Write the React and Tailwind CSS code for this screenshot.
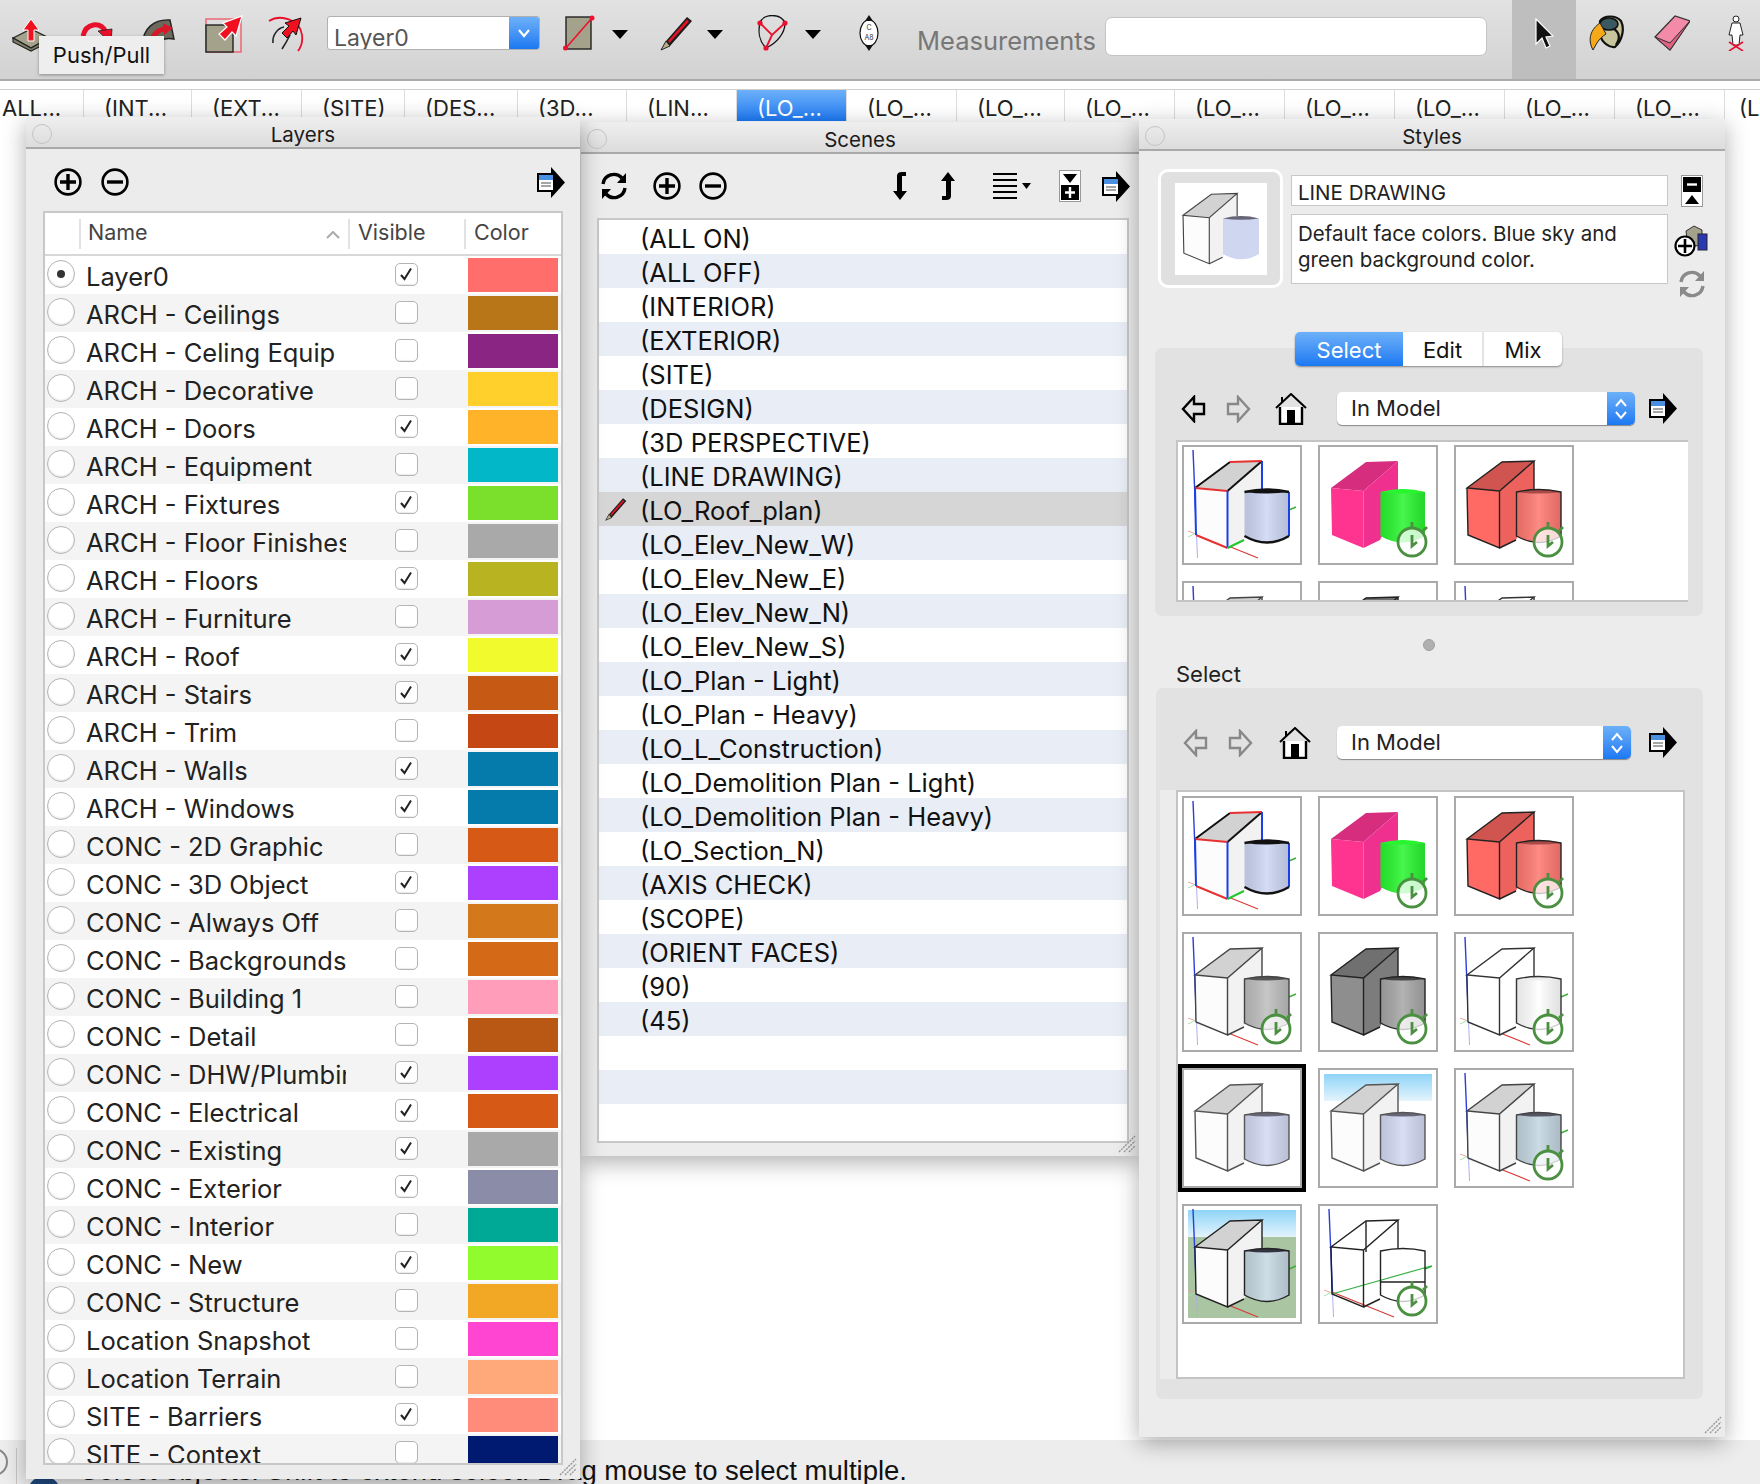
import { useId } from "react";

const tabs = [
  { label: "ALL...", w: "w-[84px]", left: true },
  { label: "(INT...", w: "w-[108px]" },
  { label: "(EXT...", w: "w-[110px]" },
  { label: "(SITE)", w: "w-[103px]" },
  { label: "(DES...", w: "w-[113px]" },
  { label: "(3D...", w: "w-[109px]" },
  { label: "(LIN...", w: "w-[110px]" },
  { label: "(LO_...", w: "w-[110px]", active: true },
  { label: "(LO_...", w: "w-[110px]" },
  { label: "(LO_...", w: "w-[108px]" },
  { label: "(LO_...", w: "w-[110px]" },
  { label: "(LO_...", w: "w-[110px]" },
  { label: "(LO_...", w: "w-[110px]" },
  { label: "(LO_...", w: "w-[110px]" },
  { label: "(LO_...", w: "w-[110px]" },
  { label: "(LO_...", w: "w-[110px]" },
];

const layers = [
  ["Layer0", true, "bg-[#ff6e6b]"],
  ["ARCH - Ceilings", false, "bg-[#b87618]"],
  ["ARCH - Celing Equip", false, "bg-[#8a2583]"],
  ["ARCH - Decorative", false, "bg-[#ffd02b]"],
  ["ARCH - Doors", true, "bg-[#ffb328]"],
  ["ARCH - Equipment", false, "bg-[#02b7c7]"],
  ["ARCH - Fixtures", true, "bg-[#7ae02b]"],
  ["ARCH - Floor Finishes", false, "bg-[#a9a9a9]"],
  ["ARCH - Floors", true, "bg-[#b8b321]"],
  ["ARCH - Furniture", false, "bg-[#d69cd6]"],
  ["ARCH - Roof", true, "bg-[#f1fa2d]"],
  ["ARCH - Stairs", true, "bg-[#c65a14]"],
  ["ARCH - Trim", false, "bg-[#c54714]"],
  ["ARCH - Walls", true, "bg-[#057bac]"],
  ["ARCH - Windows", true, "bg-[#057bac]"],
  ["CONC - 2D Graphic", false, "bg-[#d65a16]"],
  ["CONC - 3D Object", true, "bg-[#ad40ff]"],
  ["CONC - Always Off", false, "bg-[#d4791b]"],
  ["CONC - Backgrounds", false, "bg-[#d46a18]"],
  ["CONC - Building 1", false, "bg-[#ff9dbb]"],
  ["CONC - Detail", false, "bg-[#b85814]"],
  ["CONC - DHW/Plumbing", true, "bg-[#ad40ff]"],
  ["CONC - Electrical", true, "bg-[#d65a16]"],
  ["CONC - Existing", true, "bg-[#a9a9a9]"],
  ["CONC - Exterior", true, "bg-[#8b8ca8]"],
  ["CONC - Interior", false, "bg-[#00a896]"],
  ["CONC - New", true, "bg-[#92fb2d]"],
  ["CONC - Structure", false, "bg-[#f2a825]"],
  ["Location Snapshot", false, "bg-[#ff45d2]"],
  ["Location Terrain", false, "bg-[#ffa97a]"],
  ["SITE - Barriers", true, "bg-[#ff8c7a]"],
  ["SITE - Context", false, "bg-[#001a72]"],
];

const scenes = [
  "(ALL ON)", "(ALL OFF)", "(INTERIOR)", "(EXTERIOR)", "(SITE)", "(DESIGN)",
  "(3D PERSPECTIVE)", "(LINE DRAWING)", "(LO_Roof_plan)", "(LO_Elev_New_W)",
  "(LO_Elev_New_E)", "(LO_Elev_New_N)", "(LO_Elev_New_S)", "(LO_Plan - Light)",
  "(LO_Plan - Heavy)", "(LO_L_Construction)", "(LO_Demolition Plan - Light)",
  "(LO_Demolition Plan - Heavy)", "(LO_Section_N)", "(AXIS CHECK)", "(SCOPE)",
  "(ORIENT FACES)", "(90)", "(45)", "", "", "",
];

/* ---------------- STYLE THUMBNAILS ---------------- */
const WHITE_BOX = { front: "#fcfcfc", top: "#d2d2d2", side: "#f2f2f2" };

const thumbs = [
  { ...WHITE_BOX, cyl: "#ced6f3", cylTop: "#111", colored: true, axes: true },
  { front: "#ff3390", top: "#d62d7e", side: "#f0308f", cyl: "#27f52e", cylTop: "#27f52e", clock: true },
  { front: "#ff6a65", top: "#d05550", side: "#ee625d", cyl: "#ff7770", cylTop: "#a84a48", edge: "#222", clock: true },
  { ...WHITE_BOX, cyl: "#bdbdbd", cylTop: "#555", edge: "#444", axes: true, clock: true },
  { front: "#8e8e8e", top: "#707070", side: "#7c7c7c", cyl: "#a6a6a6", cylTop: "#444", edge: "#222", clock: true },
  { front: "#fff", top: "#fff", side: "#fff", cyl: "#fff", cylTop: "#eee", edge: "#333", axes: true, clock: true },
  { ...WHITE_BOX, cyl: "#d3d9f3", cylTop: "#667", edge: "#555", selected: true },
  { ...WHITE_BOX, cyl: "#d3d9f3", cylTop: "#667", edge: "#555", sky: true },
  { ...WHITE_BOX, cyl: "#c3d5e0", cylTop: "#556", edge: "#444", axes: true, clock: true },
  { ...WHITE_BOX, cyl: "#c6d8e2", cylTop: "#334", edge: "#222", axes: true, sky: true, ground: true },
  { front: "none", top: "none", side: "none", cyl: "none", cylTop: "#fff", edge: "#222", axes: true, xray: true, clock: true },
];

const CYL = "M62.5 47 Q85 42 107 47 V91 Q85 104 62.5 91Z";

const Thumb = ({ t }) => {
  const id = useId();
  const edge = t.edge;
  return (
    <div className={`w-[120px] h-[120px] border-2 border-[#aaaaaa] bg-white ${t.selected ? "ring-4 ring-black" : ""}`}>
      <svg viewBox="2 2 116 116" className="w-full h-full blur-[0.35px]">
        <defs>
          <linearGradient id={id + "s"} x1="0" y1="0" x2="0" y2="1">
            <stop offset="0" stopColor="#8fd4f8" />
            <stop offset="1" stopColor="#e4f4fc" />
          </linearGradient>
          <linearGradient id={id + "c"} x1="0" y1="0" x2="1" y2="0">
            <stop offset="0" stopColor="#000" stopOpacity="0.1" />
            <stop offset="0.5" stopColor="#fff" stopOpacity="0.15" />
            <stop offset="1" stopColor="#000" stopOpacity="0.12" />
          </linearGradient>
        </defs>
        {t.sky && <rect x="6" y="6" width="108" height="27" fill={`url(#${id}s)`} />}
        {t.ground && <rect x="6" y="33" width="108" height="81" fill="#a9c5a1" />}
        {t.axes && (
          <g fill="none" strokeWidth="1">
            <path d="M11 5 L14.5 88" stroke="#2a3fd8" strokeWidth="1.4" />
            <path d="M14.5 88 L15.5 113" stroke="#aab0f0" />
            <path d="M14 88 L76 113" stroke="#d83a3a" strokeWidth="1.2" />
            <path d="M6 86 L14 89" stroke="#e8a0a0" />
            <path d="M6 92 L14 88" stroke="#a8e0a8" />
            <path d="M107 65 L114 62" stroke="#3ab03a" strokeWidth="1.4" />
          </g>
        )}
        {t.xray && <path d="M14 90 L113 62" stroke="#35b045" strokeWidth="1.2" />}
        <polygon points="13,43 48,17 80,16 45.5,46" fill={t.top} />
        <polygon points="45.5,46 80,16 80,60 62,95 45.5,103" fill={t.side} />
        <polygon points="13,43 45.5,46 45.5,103 14,90" fill={t.front} />
        <path d={CYL} fill={t.cyl} />
        {t.cyl !== "none" && <path d={CYL} fill={`url(#${id}c)`} />}
        <path d="M62.5 47 Q85 41 107 47 Q85 50 62.5 47Z" fill={t.cylTop} />
        {edge && (
          <g fill="none" stroke={edge} strokeWidth="1.4">
            <path d="M13 43 L48 17 L80 16 L45.5 46 Z M13 43 L14 90 L45.5 103 L45.5 46" />
            <path d="M80 16 V44 M45.5 103 L62 95" />
            <path d={CYL} />
            {t.xray && <path d="M48 17 V48 M62.5 78 H107" />}
          </g>
        )}
        {t.colored && (
          <g fill="none" strokeWidth="2">
            <path d="M13 43 L48 17 M80 16 L45.5 46" stroke="#111" />
            <path d="M48 17 L80 16 M13 43 L45.5 46 M14 90 L45.5 103" stroke="#e83030" />
            <path d="M13 43 L14 90 M45.5 46 V103 M80 16 V46 M107 47 V91" stroke="#1a40e8" />
            <path d="M45.5 103 L62 95" stroke="#22c830" />
            <path d="M62.5 47 Q85 42 107 47 M62.5 91 Q85 104 107 91" stroke="#111" strokeWidth="2.4" />
          </g>
        )}
        {t.clock && (
          <g fill="none" stroke="#4a9040">
            <circle cx="94" cy="97" r="14" strokeWidth="2.8" fill="#ffffff" fillOpacity="0.75" />
            <path d="M94 83 V77 M105 86 L109 82" strokeWidth="2.8" />
            <path d="M94 90 V101 L99 97" strokeWidth="2.8" />
          </g>
        )}
      </svg>
    </div>
  );
};

/* ---------------- ICONS ---------------- */
const PlusCircle = () => (
  <svg width="28" height="28" viewBox="0 0 28 28" fill="none" stroke="#000" strokeWidth="2.6">
    <circle cx="14" cy="14" r="12.4" />
    <path d="M14 6 V22 M6 14 H22" strokeWidth="3.4" />
  </svg>
);

const MinusCircle = () => (
  <svg width="28" height="28" viewBox="0 0 28 28" fill="none" stroke="#000" strokeWidth="2.6">
    <circle cx="14" cy="14" r="12.4" />
    <path d="M6 14 H22" strokeWidth="3.4" />
  </svg>
);

const DetailsArrow = () => (
  <svg width="28" height="31" viewBox="0 0 28 31">
    <path d="M0 6 H14 V0 L28 15.5 L14 31 V25 H0 Z" fill="#000" />
    <rect x="2" y="8" width="14" height="15" fill="#fff" />
    <rect x="2" y="8" width="14" height="5" fill="#4a8fe0" />
    <path d="M4 16 H14 M4 19 H14" stroke="#888" strokeWidth="1.5" />
  </svg>
);

const SyncIcon = ({ color = "#000" }) => (
  <svg width="28" height="28" viewBox="0 0 28 28" fill="none" stroke={color} strokeWidth="3.4">
    <path d="M3 12 A11 11 0 0 1 22 6" />
    <path d="M25 16 A11 11 0 0 1 6 22" />
    <path d="M26 1 V11 H17 Z M2 27 V17 H11 Z" fill={color} stroke="none" />
  </svg>
);

const Caret = ({ className }) => (
  <svg width="16" height="9" viewBox="0 0 16 9" className={className}>
    <path d="M0 0 H16 L8 9 Z" fill="#000" />
  </svg>
);

const PushPullIcon = () => (
  <svg width="38" height="34" viewBox="0 0 38 34" className="mt-[3px]">
    <path d="M1 20 L19 11 L37 20 L19 30 Z" fill="#a4a28a" stroke="#222" strokeWidth="1.2" />
    <path d="M1 20 V24 L19 33 L37 24 V20 L19 30 Z" fill="#7f7d6a" stroke="#222" strokeWidth="1.2" />
    <path d="M19 1 L27 12 H22 V23 H16 V12 H11 Z" fill="#f01020" stroke="#fff" strokeWidth="1" />
  </svg>
);

const RotateIcon = () => (
  <svg width="33" height="30" viewBox="0 0 33 30" className="mt-[4px]" fill="none">
    <path d="M3 17 C6 4 20 2 26 13" stroke="#e8102a" strokeWidth="5" />
    <path d="M18 12 L32 10 L31 24 Z" fill="#e8102a" stroke="#222" strokeWidth="0.8" />
  </svg>
);

const FollowMeIcon = () => (
  <svg width="36" height="34" viewBox="0 0 36 34" className="mt-[2px]" fill="none">
    <path d="M3 28 C2 12 14 2 30 3 L34 22 C24 20 16 24 14 32 Z" fill="#6c6a5c" stroke="#222" strokeWidth="1.4" />
    <path d="M11 27 C12 18 18 12 26 12" stroke="#d81828" strokeWidth="5" />
    <path d="M23 6 L33 11 L24 18 Z" fill="#d81828" />
  </svg>
);

const MoveIcon = () => (
  <svg width="38" height="38" viewBox="0 0 38 38">
    <rect x="1" y="4" width="35" height="33" fill="none" stroke="#f06070" strokeWidth="1.4" />
    <rect x="1" y="10" width="27" height="27" fill="#a4a28a" stroke="#222" strokeWidth="1.4" />
    <path d="M37 1 L31 21 L27 17 L20 25 L14 19 L22 12 L18 8 Z" fill="#f01020" stroke="#fff" strokeWidth="1.2" />
  </svg>
);

const OffsetIcon = () => (
  <svg width="36" height="38" viewBox="0 0 36 38" fill="none">
    <path d="M1 6 C12 -1 32 4 34 20 C35 27 33 32 30 36" stroke="#e8102a" strokeWidth="1.8" />
    <path d="M5 28 C4 20 10 13 16 12 M14 34 C18 28 20 24 22 20" stroke="#222" strokeWidth="1.6" />
    <path d="M33 3 L28 20 L25 16 L19 23 L14 18 L21 11 L17 8 Z" fill="#f01020" stroke="#111" strokeWidth="1" />
  </svg>
);

const RectLineIcon = () => (
  <svg width="32" height="36" viewBox="0 0 32 36">
    <rect x="3" y="2" width="25" height="32" fill="#a4a28a" stroke="#222" strokeWidth="1.4" />
    <path d="M2 34 L29 3" stroke="#f01030" strokeWidth="1.6" />
    <circle cx="2.5" cy="33" r="2.5" fill="#f01030" />
    <circle cx="29" cy="3" r="2.5" fill="#f01030" />
  </svg>
);

const PencilIcon = ({ w = 33, h = 36 }) => (
  <svg width={w} height={h} viewBox="0 0 33 36">
    <path d="M1 35 L6 26 L27 2 L32 6 L10 31 Z" fill="#1c1c1c" />
    <path d="M8 26 L27 4.5 L29 6.5 L9.5 28 Z" fill="#e01426" />
    <path d="M1 35 L6 26 L10 31 Z" fill="#b8ac88" stroke="#111" strokeWidth="0.8" />
  </svg>
);

const PolygonIcon = () => (
  <svg width="34" height="36" viewBox="0 0 34 36" fill="none">
    <path d="M5 8 C8 -2 26 -2 30 8 C30 18 22 28 11 33 C4 26 3 16 5 8" stroke="#111" strokeWidth="1.3" />
    <path d="M5 8 L17 20 L30 8 M17 20 L11 33" stroke="#e81030" strokeWidth="1.8" />
    <circle cx="5" cy="8" r="2.6" fill="#e81030" />
    <circle cx="30" cy="8" r="2.6" fill="#e81030" />
    <circle cx="11" cy="33" r="2.6" fill="#e81030" />
  </svg>
);

const SectionIcon = () => (
  <svg width="20" height="36" viewBox="0 0 20 36">
    <ellipse cx="10" cy="18" rx="9" ry="13" fill="#fff" stroke="#111" strokeWidth="1.2" />
    <path d="M10 0 L14 6 H6 Z M10 36 L14 30 H6 Z" fill="#111" />
    <text x="10" y="15" fontSize="7" textAnchor="middle" fill="#333" fontFamily="Inter, sans-serif">C</text>
    <text x="10" y="25" fontSize="7" textAnchor="middle" fill="#333" fontFamily="Inter, sans-serif">A8</text>
  </svg>
);

const ArrowCursor = () => (
  <svg width="20" height="32" viewBox="0 0 20 32">
    <path d="M2 1 V26 L8 20 L12 30 L16 28 L12 19 L19 18 Z" fill="#111" stroke="#fff" strokeWidth="1.2" />
  </svg>
);

const PaintIcon = () => (
  <svg width="36" height="36" viewBox="0 0 36 36" fill="none">
    <path d="M12 6 C16 0 28 0 33 6 C37 14 34 26 27 32 C22 33 14 28 12 20 Z" fill="#c8c49c" stroke="#111" strokeWidth="2.2" />
    <ellipse cx="21" cy="9" rx="9" ry="6" fill="#3a5860" stroke="#111" strokeWidth="1.6" />
    <path d="M26 14 C32 18 32 24 28 30" stroke="#111" strokeWidth="2.4" />
    <path d="M12 8 C3 14 -1 24 5 35 C8 30 10 24 18 19 Z" fill="#f5a818" stroke="#222" strokeWidth="1" />
  </svg>
);

const EraserIcon = () => (
  <svg width="36" height="36" viewBox="0 0 36 36">
    <path d="M1 22 L21 1 L36 6 L16 35 Z" fill="#f28aa8" stroke="#333" strokeWidth="1.2" />
    <path d="M1 22 L16 28 L36 6 L16 35 Z" fill="#e0607f" stroke="#333" strokeWidth="1" />
  </svg>
);

const ManIcon = () => (
  <svg width="18" height="36" viewBox="0 0 18 36">
    <circle cx="9" cy="4" r="3" fill="#fff" stroke="#222" />
    <path d="M5 8 H13 L16 20 H13 L12 30 H6 L5 20 H2 Z" fill="#fff" stroke="#222" />
    <path d="M2 27 L16 36 M16 27 L2 36" stroke="#e81030" strokeWidth="1.6" />
  </svg>
);

const BentArrow = ({ up }) => (
  <svg width="14" height="28" viewBox="0 0 14 28" fill="#000">
    {up ? (
      <path d="M7 0 L14 9 H10 V24 Q10 28 5 28 H1 V24 H5 V9 H0 Z" />
    ) : (
      <path d="M7 28 L0 19 H4 V4 Q4 0 9 0 H13 V4 H9 V19 H14 Z" />
    )}
  </svg>
);

const ListLines = () => (
  <svg width="38" height="28" viewBox="0 0 38 28">
    <path d="M0 2 H24 M0 8 H24 M0 14 H24 M0 20 H24 M0 26 H24" stroke="#000" strokeWidth="2" />
    <path d="M29 11 H38 L33.5 17 Z" fill="#000" />
  </svg>
);

const SplitDown = () => (
  <svg width="22" height="32" viewBox="0 0 22 32">
    <rect x="0.5" y="0.5" width="21" height="31" fill="#fff" stroke="#999" />
    <rect x="2" y="15" width="18" height="15" fill="#000" />
    <path d="M4 4 H18 L11 13 Z" fill="#000" />
    <path d="M11 17 V28 M6 22.5 H16" stroke="#fff" strokeWidth="2.4" />
  </svg>
);

const SplitUp = () => (
  <svg width="22" height="32" viewBox="0 0 22 32" className="shrink-0">
    <rect x="0.5" y="0.5" width="21" height="31" fill="#fff" stroke="#999" />
    <rect x="2" y="2" width="18" height="15" fill="#000" />
    <path d="M6 9.5 H16" stroke="#fff" strokeWidth="2.4" />
    <path d="M4 29 H18 L11 20 Z" fill="#000" />
  </svg>
);

const AddStyleIcon = () => (
  <svg width="34" height="32" viewBox="0 0 34 32">
    <path d="M12 6 L20 1 L28 5 V20 L14 22 Z" fill="#a4a28a" stroke="#333" />
    <rect x="24" y="9" width="9" height="16" fill="#2a38b0" stroke="#223" />
    <circle cx="11" cy="21" r="9.5" fill="#fff" stroke="#000" strokeWidth="2.2" />
    <path d="M11 14 V28 M4 21 H18" stroke="#000" strokeWidth="2.6" />
  </svg>
);

const NavArrow = ({ right, color = "#000" }) => (
  <svg width="25" height="28" viewBox="0 0 25 28" fill="#fff" stroke={color} strokeWidth="2.4">
    {right ? (
      <path d="M2 9 H12 V2 L23 14 L12 26 V19 H2 Z" fill="none" />
    ) : (
      <path d="M23 9 H13 V2 L2 14 L13 26 V19 H23 Z" fill="none" />
    )}
  </svg>
);

const HomeIcon = () => (
  <svg width="34" height="32" viewBox="0 0 34 32">
    <path d="M2 15 L17 1 L32 15" fill="none" stroke="#000" strokeWidth="2" />
    <path d="M8 4 V10" stroke="#000" strokeWidth="2" />
    <path d="M6 14 V31 H28 V14" fill="#fff" stroke="#000" strokeWidth="2.4" />
    <rect x="13" y="17" width="8" height="14" fill="#000" />
  </svg>
);

const Grip = () => (
  <svg width="18" height="18" viewBox="0 0 18 18" stroke="#999" strokeWidth="1.4" className="absolute right-[3px] bottom-[3px]">
    <path d="M1 17 L17 1 M6 17 L17 6 M11 17 L17 11" strokeDasharray="2 1" />
  </svg>
);

/* ---------------- SHARED PIECES ---------------- */
const Panel = ({ title, className, children }) => (
  <div className={`absolute bg-[#ececec] shadow-[0_6px_22px_rgba(0,0,0,0.32)] flex flex-col ${className}`}>
    <div className="relative h-[32px] shrink-0 bg-gradient-to-b from-[#efefef] to-[#dcdcdc] border-b-2 border-[#a9a9a9] flex items-center justify-center pt-[6px] text-[20.5px] text-[#1c1c1c]">
      <span className="absolute left-[6px] top-[7px] w-[20px] h-[20px] rounded-full border border-[#c4c4c4]" />
      {title}
    </div>
    {children}
    <Grip />
  </div>
);

const StyleSelect = ({ w }) => (
  <div className={`h-[33px] ${w} bg-white rounded-[5px] shadow-[0_1px_1px_rgba(0,0,0,0.4)] flex items-center justify-between overflow-hidden`}>
    <span className="pl-[14px] text-[22px] text-[#222]">In Model</span>
    <span className="w-[28px] h-full bg-gradient-to-b from-[#6cb0f8] to-[#1a78f2] flex items-center justify-center">
      <svg width="14" height="24" viewBox="0 0 14 24" fill="none" stroke="#fff" strokeWidth="2">
        <path d="M2 9 L7 3 L12 9 M2 15 L7 21 L12 15" />
      </svg>
    </span>
  </div>
);

const LayerRow = ({ name, visible, color, index }) => (
  <div className={`h-[38px] flex items-center pl-[2px] ${index % 2 ? "bg-[#f4f4f4]" : "bg-white"}`}>
    <span className="w-[28px] h-[28px] -mt-[2px] rounded-full bg-white border border-[#b4b4b4] shadow-[inset_0_-1px_2px_rgba(0,0,0,0.12)] flex items-center justify-center shrink-0">
      {index === 0 && <span className="w-[8px] h-[8px] rounded-full bg-[#333]" />}
    </span>
    <span className="ml-[11px] w-[260px] overflow-hidden whitespace-nowrap text-[25.5px] leading-[34px] text-[#222] pt-[4px]">{name}</span>
    <span className="w-[120px] flex justify-center">
      <span className="w-[23px] h-[23px] -mt-[2px] rounded-[5px] bg-white border border-[#b4b4b4] shadow-[inset_0_-1px_1px_rgba(0,0,0,0.08)] flex items-center justify-center">
        {visible && (
          <svg width="14" height="14" viewBox="0 0 14 14" fill="none" stroke="#222" strokeWidth="2">
            <path d="M2 8 L5.5 12 L12 1.5" />
          </svg>
        )}
      </span>
    </span>
    <span className={`ml-[2px] w-[90px] h-[34px] ${color}`} />
  </div>
);

const App = () => {
  return (
    <div className="relative w-[1760px] h-[1484px] overflow-hidden bg-white font-[Inter,sans-serif] text-[#222]">
      {/* TOOLBAR */}
      <div className="relative h-[81px] bg-gradient-to-b from-[#e2e2e2] to-[#d2d2d2] border-b-2 border-[#ababab] flex items-start pt-[15px]">
        <span className="ml-[12px]"><PushPullIcon /></span>
        <span className="ml-[30px]"><RotateIcon /></span>
        <span className="ml-[27px]"><FollowMeIcon /></span>
        <span className="ml-[29px]"><MoveIcon /></span>
        <span className="ml-[25px]"><OffsetIcon /></span>
        <div className="ml-[23px] mt-[1px] w-[213px] h-[34px] bg-white border border-[#b0b0b0] rounded-[3px] flex justify-between overflow-hidden">
          <span className="pl-[6px] pt-[5px] text-[23px] leading-[32px] text-[#555]">Layer0</span>
          <span className="w-[30px] h-full bg-gradient-to-b from-[#6cb0f8] to-[#1a78f2] flex items-center justify-center">
            <svg width="14" height="10" viewBox="0 0 14 10" fill="none" stroke="#fff" strokeWidth="2.2">
              <path d="M2 2 L7 8 L12 2" />
            </svg>
          </span>
        </div>
        <span className="ml-[23px]"><RectLineIcon /></span>
        <Caret className="ml-[17px] mt-[15px]" />
        <span className="ml-[32px]"><PencilIcon /></span>
        <Caret className="ml-[14px] mt-[15px]" />
        <span className="ml-[32px]"><PolygonIcon /></span>
        <Caret className="ml-[16px] mt-[15px]" />
        <span className="ml-[38px]"><SectionIcon /></span>
        <span className="ml-[38px] mt-[10px] text-[25.5px] leading-[32px] text-[#777] w-[179px] whitespace-nowrap">Measurements</span>
        <div className="ml-[9px] mt-[2px] w-[382px] h-[39px] bg-white rounded-[7px] border border-[#c4c4c4] shrink-0" />
        <div className="ml-[25px] -mt-[15px] w-[64px] h-[79px] bg-[#bebebe] flex justify-center pt-[18px]">
          <ArrowCursor />
        </div>
        <span className="ml-[12px]"><PaintIcon /></span>
        <span className="ml-[30px]"><EraserIcon /></span>
        <span className="ml-[37px]"><ManIcon /></span>
        <div className="absolute left-[39px] top-[36px] w-[125px] h-[38px] bg-[#eeeeee] shadow-[0_1px_3px_rgba(0,0,0,0.35)] flex items-center justify-center text-[22px] text-[#111]">
          Push/Pull
        </div>
      </div>

      {/* SCENE TABS */}
      <div className="mt-[8px] h-[32px] bg-white border-t border-[#d0d0d0] flex overflow-hidden">
        {tabs.map((tab, i) => (
          <div
            key={i}
            className={`${tab.w} shrink-0 text-[22px] leading-[36px] whitespace-nowrap border-r border-[#dddddd] ${
              tab.active ? "bg-gradient-to-b from-[#6cb0f8] to-[#1a78f2] text-white" : "text-[#222]"
            } ${tab.left ? "pl-[2px]" : "pl-[20px]"}`}
          >
            {tab.label}
          </div>
        ))}
        <div className="flex-1 text-[22px] leading-[36px] pl-[14px] whitespace-nowrap overflow-hidden">(L</div>
      </div>

      {/* STATUS BAR */}
      <div className="absolute left-0 right-0 bottom-0 h-[44px] bg-[#ededed] flex items-start">
        <span className="-ml-[20px] mt-[8px] w-[28px] h-[28px] rounded-full border-2 border-[#888] shrink-0" />
        <span className="ml-[8px] mt-[8px] w-px h-[36px] bg-[#c8c8c8] shrink-0" />
        <span className="ml-[11px] mt-[36px] w-[32px] h-[32px] rounded-full bg-[#1f4a80] shrink-0" />
        <span className="w-[847px] shrink-0 mt-[13px] text-right text-[27.5px] leading-[36px] text-[#111] whitespace-nowrap font-['Liberation_Sans',sans-serif]">
          Select objects. Shift to extend select. Drag mouse to select multiple.
        </span>
      </div>

      {/* SCENES */}
      <Panel title="Scenes" className="left-[581px] top-[122px] w-[558px] h-[1034px] z-10">
        <div className="h-[64px] shrink-0 flex items-center">
          <span className="ml-[19px]"><SyncIcon /></span>
          <span className="ml-[25px]"><PlusCircle /></span>
          <span className="ml-[18px]"><MinusCircle /></span>
          <span className="ml-[166px]"><BentArrow /></span>
          <span className="ml-[34px]"><BentArrow up /></span>
          <span className="ml-[38px]"><ListLines /></span>
          <span className="ml-[28px]"><SplitDown /></span>
          <span className="ml-[21px]"><DetailsArrow /></span>
        </div>
        <div className="ml-[16px] w-[532px] h-[925px] border-2 border-[#c8c8c8] bg-white overflow-hidden">
          {scenes.map((s, i) => (
            <div
              key={i}
              className={`h-[34px] flex items-center text-[25.5px] leading-[30px] text-[#111] ${
                i === 8 ? "bg-[#d6d6d6]" : i % 2 ? "bg-[#e9edf5]" : "bg-white"
              }`}
            >
              <span className="w-[41px] pl-[6px] shrink-0 flex items-center">
                {i === 8 && <PencilIcon w={22} h={24} />}
              </span>
              <span className="pt-[4px]">{s}</span>
            </div>
          ))}
        </div>
      </Panel>

      {/* LAYERS */}
      <Panel title="Layers" className="left-[26px] top-[117px] w-[554px] h-[1362px] z-20">
        <div className="h-[62px] shrink-0 flex items-center pl-[28px] pr-[15px] pt-1">
          <PlusCircle />
          <span className="ml-[19px]"><MinusCircle /></span>
          <span className="ml-auto"><DetailsArrow /></span>
        </div>
        <div className="mx-[17px] h-[1254px] border-2 border-[#c8c8c8] bg-white overflow-hidden">
          <div className="h-[43px] flex items-center border-b-2 border-[#d8d8d8] text-[21.5px] text-[#444]">
            <span className="w-[36px] h-[30px] border-r-2 border-[#e2e2e2]" />
            <span className="w-[269px] h-[30px] pl-[7px] leading-[26px] border-r-2 border-[#e2e2e2] relative">
              Name
              <svg width="14" height="8" viewBox="0 0 14 8" fill="none" stroke="#aaa" strokeWidth="2" className="absolute right-[8px] top-[12px]">
                <path d="M1 7 L7 1 L13 7" />
              </svg>
            </span>
            <span className="w-[116px] h-[30px] pl-[8px] leading-[26px] border-r-2 border-[#e2e2e2]">Visible</span>
            <span className="pl-[8px] h-[30px] leading-[26px]">Color</span>
          </div>
          {layers.map(([name, visible, color], i) => (
            <LayerRow key={name} name={name} visible={visible} color={color} index={i} />
          ))}
        </div>
      </Panel>

      {/* STYLES */}
      <Panel title="Styles" className="left-[1139px] top-[119px] w-[586px] h-[1318px] z-30">
        <div className="h-[137px] shrink-0 flex pl-[19px] pt-[18px]">
          <div className="w-[125px] h-[119px] rounded-[10px] border-[3px] border-white bg-[#e0e0e0] flex items-center justify-center shrink-0">
            <div className="w-[92px] h-[92px] bg-white flex items-center justify-center overflow-hidden">
              <svg viewBox="8 12 104 96" className="w-[84px] h-[84px] blur-[0.3px]">
                <polygon points="13,43 48,17 80,16 45.5,46" fill="#d2d2d2" />
                <polygon points="45.5,46 80,16 80,60 62,95 45.5,103" fill="#f2f2f2" />
                <polygon points="13,43 45.5,46 45.5,103 14,90" fill="#fcfcfc" />
                <path d={CYL} fill="#ced6f0" />
                <path d="M62.5 47 Q85 41 107 47 Q85 50 62.5 47Z" fill="#667" />
                <path d="M13 43 L48 17 L80 16 L45.5 46 Z M13 43 L14 90 L45.5 103 L45.5 46 M80 16 V44 M45.5 103 L62 95" fill="none" stroke="#444" strokeWidth="1.4" />
              </svg>
            </div>
          </div>
          <div className="ml-[8px] pt-[6px] w-[377px] shrink-0">
            <div className="h-[31px] bg-white border border-[#c8c8c8] pl-[6px] pt-[2px] text-[20.5px] leading-[30px] text-[#222]">LINE DRAWING</div>
            <div className="mt-[8px] h-[70px] bg-white border border-[#c8c8c8] pl-[6px] pt-[6px] text-[20.5px] leading-[26px] text-[#222]">
              Default face colors. Blue sky and green background color.
            </div>
          </div>
          <div className="ml-[8px] pt-[6px] flex flex-col items-center">
            <SplitUp />
            <span className="mt-[18px] -ml-[2px] shrink-0"><AddStyleIcon /></span>
            <span className="mt-[13px] shrink-0"><SyncIcon color="#8a8a8a" /></span>
          </div>
        </div>

        {/* upper browser */}
        <div className="relative ml-[16px] mt-[60px] w-[548px] h-[268px] bg-[#e2e2e2] rounded-[7px] flex flex-col shrink-0">
          <div className="absolute left-[140px] -top-[16px] w-[267px] h-[34px] bg-white rounded-[5px] shadow-[0_1px_2px_rgba(0,0,0,0.4)] flex overflow-hidden text-[22px] leading-[36px] text-center">
            <span className="w-[108px] bg-gradient-to-b from-[#6cb0f8] to-[#1a78f2] text-white">Select</span>
            <span className="w-[81px] border-r-2 border-[#e4e4e4] text-[#111]">Edit</span>
            <span className="flex-1 text-[#111]">Mix</span>
          </div>
          <div className="mt-[44px] h-[33px] flex items-center">
            <span className="ml-[26px]"><NavArrow /></span>
            <span className="ml-[20px]"><NavArrow right color="#888" /></span>
            <span className="ml-[23px]"><HomeIcon /></span>
            <span className="ml-[29px]"><StyleSelect w="w-[298px]" /></span>
            <span className="ml-[14px]"><DetailsArrow /></span>
          </div>
          <div className="ml-[21px] mt-[15px] w-[512px] h-[162px] bg-white border-y-2 border-l-2 border-[#c4c4c4] overflow-hidden">
            <div className="grid grid-cols-[120px_120px_120px] gap-4 pl-[4px] pt-[3px]">
              {thumbs.slice(0, 6).map((t, i) => <Thumb key={i} t={t} />)}
            </div>
          </div>
        </div>

        <span className="ml-[284px] mt-[23px] w-[12px] h-[12px] rounded-full bg-[#b0b0b0] border border-[#a0a0a0] shrink-0" />
        <div className="ml-[37px] mt-[9px] h-[28px] shrink-0 text-[22px] leading-[28px] text-[#222]">Select</div>

        {/* lower browser */}
        <div className="ml-[17px] w-[547px] h-[711px] bg-[#e2e2e2] rounded-[7px] flex flex-col shrink-0">
          <div className="mt-[38px] h-[33px] flex items-center">
            <span className="ml-[27px]"><NavArrow color="#888" /></span>
            <span className="ml-[20px]"><NavArrow right color="#888" /></span>
            <span className="ml-[25px]"><HomeIcon /></span>
            <span className="ml-[25px]"><StyleSelect w="w-[294px]" /></span>
            <span className="ml-[18px]"><DetailsArrow /></span>
          </div>
          <div className="mt-[31px] ml-[4px] flex">
            <div className="w-[16px] h-[589px] bg-[#ececec]" />
            <div className="w-[509px] h-[589px] bg-white border-2 border-[#c4c4c4]">
              <div className="grid grid-cols-[120px_120px_120px] gap-4 pl-[4px] pt-[4px]">
                {thumbs.map((t, i) => <Thumb key={i} t={t} />)}
              </div>
            </div>
          </div>
        </div>
      </Panel>
    </div>
  );
};

export default App;
